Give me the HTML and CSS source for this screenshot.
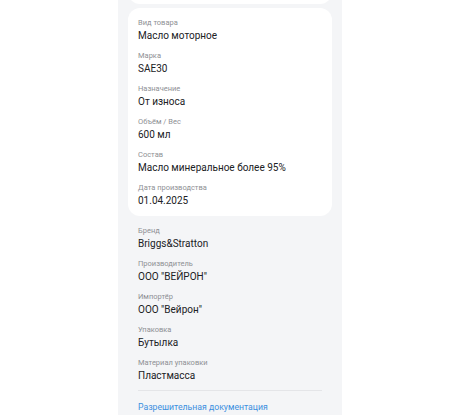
FILE: index.html
```html
<!DOCTYPE html>
<html lang="ru">
<head>
<meta charset="utf-8">
<link rel="stylesheet" href="styles.css">
</head>
<body>
<div class="column">
  <div class="prev-card"></div>
  <div class="card">
    <div class="row"><div class="label">Вид товара</div><div class="value">Масло моторное</div></div>
    <div class="row"><div class="label">Марка</div><div class="value">SAE30</div></div>
    <div class="row"><div class="label">Назначение</div><div class="value">От износа</div></div>
    <div class="row"><div class="label">Объём / Вес</div><div class="value">600 мл</div></div>
    <div class="row"><div class="label">Состав</div><div class="value">Масло минеральное более 95%</div></div>
    <div class="row"><div class="label">Дата производства</div><div class="value">01.04.2025</div></div>
  </div>
  <div class="plain">
    <div class="row"><div class="label">Бренд</div><div class="value">Briggs&amp;Stratton</div></div>
    <div class="row"><div class="label">Производитель</div><div class="value">ООО "ВЕЙРОН"</div></div>
    <div class="row"><div class="label">Импортёр</div><div class="value">ООО "Вейрон"</div></div>
    <div class="row"><div class="label">Упаковка</div><div class="value">Бутылка</div></div>
    <div class="row"><div class="label">Материал упаковки</div><div class="value">Пластмасса</div></div>
    <div class="divider"></div>
    <a class="link" href="#">Разрешительная документация</a>
  </div>
</div>
</body>
</html>
```
FILE: styles.css
```css
html, body {
  margin: 0;
  padding: 0;
  background: #ffffff;
  font-family: Roboto, "Noto Sans", sans-serif;
  overflow: hidden;
}
.column {
  display: flex;
  flex-direction: column;
  width: 224px;
  margin-left: 118px;
  height: 415px;
  background: #f4f5f7;
  padding: 0 10px;
  box-sizing: border-box;
}
.prev-card {
  flex: none;
  margin-top: -20px;
  height: 24px;
  background: #ffffff;
  border-radius: 12px;
}
.card {
  flex: none;
  margin-top: 4px;
  background: #ffffff;
  border-radius: 12px;
  padding: 9px 10px 8px;
  display: flex;
  flex-direction: column;
  gap: 7px;
}
.plain {
  flex: none;
  padding: 9px 10px 0;
  display: flex;
  flex-direction: column;
  gap: 7px;
}
.label {
  font-size: 7.5px;
  line-height: 12px;
  color: #8e9094;
}
.value {
  font-size: 10px;
  line-height: 14px;
  color: #202124;
}
.divider {
  height: 1px;
  background: #e4e5e8;
  margin-top: 0;
}
.link {
  font-size: 8.7px;
  line-height: 12px;
  color: #3b8fe0;
  text-decoration: none;
  margin-top: 3px;
}
```
